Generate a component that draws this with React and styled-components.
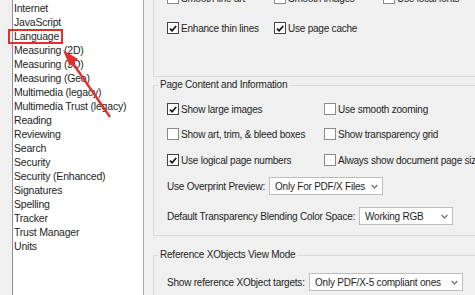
import React from 'react';
import styled, { createGlobalStyle } from 'styled-components';

const GlobalStyle = createGlobalStyle`
  html, body {
    margin: 0;
    padding: 0;
    background: #f0f0f0;
    font-family: "Liberation Sans", Arial, sans-serif;
    font-size: 10px;
    letter-spacing: -0.22px;
    color: #1e1e1e;
  }
`;

const Frame = styled.div`
  display: flex;
  width: 475px;
  height: 295px;
  overflow: hidden;
  position: relative;
`;

const Gutter = styled.div`
  width: 12px;
  flex: none;
`;

const List = styled.ul`
  flex: none;
  width: 129px;
  margin: 0;
  padding: 1px 0 0 1px;
  list-style: none;
  background: #fff;
  border-left: 1px solid #8f9399;
  border-right: 1px solid #a9a9a9;
  font-size: 10.5px;
  letter-spacing: -0.2px;
`;

const Item = styled.li`
  position: relative;
  height: 14px;
  line-height: 14px;
  white-space: nowrap;
`;

const Highlight = styled.span`
  position: absolute;
  left: -6px;
  top: 0;
  width: 51px;
  height: 11px;
  border: 2px solid #e2302f;
`;

const Panel = styled.div`
  flex: none;
  width: 340px;
  padding-left: 9px;
  display: flex;
  flex-direction: column;
`;

const Group = styled.fieldset`
  flex: none;
  margin: 0;
  padding: 0 0 0 13px;
  border: 1px solid #d9d9d9;
  min-width: 0;
  height: ${p => p.$h}px;
  margin-top: ${p => p.$top || 0}px;
  box-sizing: border-box;
`;

const Legend = styled.legend`
  margin-left: -9px;
  padding: 0 2px;
  line-height: 14px;
`;

const Row = styled.div`
  display: flex;
  align-items: center;
  height: 14px;
  margin-top: ${p => p.$gap || 0}px;
`;

const Check = styled.label`
  display: flex;
  align-items: center;
  width: ${p => p.$w}px;
  flex: none;
  white-space: nowrap;
`;

const Box = styled.span`
  width: 10px;
  height: 10px;
  border: 1px solid ${p => (p.$on ? '#444' : '#8a8a8a')};
  background: #fff;
  margin-right: 2px;
  flex: none;
  display: flex;
  align-items: center;
  justify-content: center;
`;

const Field = styled.div`
  display: flex;
  align-items: center;
  margin-top: ${p => p.$gap || 0}px;
  white-space: nowrap;
`;

const FieldLabel = styled.span`
  width: ${p => p.$w}px;
  flex: none;
`;

const Select = styled.div`
  width: ${p => p.$w}px;
  height: 18px;
  box-sizing: border-box;
  border: 1px solid #bdbdbd;
  background: #fff;
  display: flex;
  align-items: center;
  justify-content: space-between;
  padding: 0 4px 0 5px;
  flex: none;
`;

const Arrow = styled.svg`
  position: absolute;
  left: 0;
  top: 0;
  pointer-events: none;
`;

const Tick = () => (
  <svg width="8" height="7" viewBox="0 0 8 7">
    <path d="M1 3.6 L3.1 5.7 L7.2 1" fill="none" stroke="#111" strokeWidth="1.7" />
  </svg>
);

const Chevron = () => (
  <svg width="7" height="5" viewBox="0 0 7 5">
    <path d="M0.6 1 L3.5 3.9 L6.4 1" fill="none" stroke="#666" strokeWidth="1.1" />
  </svg>
);

const CheckItem = ({ on, w, children }) => (
  <Check $w={w}>
    <Box $on={on}>{on && <Tick />}</Box>
    {children}
  </Check>
);

const items = [
  'Internet', 'JavaScript', 'Language', 'Measuring (2D)', 'Measuring (3D)', 'Measuring (Geo)',
  'Multimedia (legacy)', 'Multimedia Trust (legacy)', 'Reading', 'Reviewing', 'Search',
  'Security', 'Security (Enhanced)', 'Signatures', 'Spelling', 'Tracker', 'Trust Manager', 'Units',
];

export default function App() {
  return (
    <>
      <GlobalStyle />
      <Frame>
        <Gutter />
        <List>
          {items.map(name => (
            <Item key={name}>
              {name}
              {name === 'Language' && <Highlight />}
            </Item>
          ))}
        </List>
        <Panel>
          <Group $h={87} $top={-10}>
            <Row>
              <CheckItem w={107}>Smooth line art</CheckItem>
              <CheckItem w={109}>Smooth images</CheckItem>
              <CheckItem w={100}>Use local fonts</CheckItem>
            </Row>
            <Row $gap={16}>
              <CheckItem on w={107}>Enhance thin lines</CheckItem>
              <CheckItem on w={109}>Use page cache</CheckItem>
            </Row>
          </Group>
          <Group $h={158} $top={1}>
            <Legend>Page Content and Information</Legend>
            <Row $gap={10}>
              <CheckItem on w={157}>Show large images</CheckItem>
              <CheckItem w={160}>Use smooth zooming</CheckItem>
            </Row>
            <Row $gap={11}>
              <CheckItem w={157}>Show art, trim, &amp; bleed boxes</CheckItem>
              <CheckItem w={160}>Show transparency grid</CheckItem>
            </Row>
            <Row $gap={12}>
              <CheckItem on w={157}>Use logical page numbers</CheckItem>
              <CheckItem w={160}>Always show document page size</CheckItem>
            </Row>
            <Field $gap={10}>
              <FieldLabel $w={102}>Use Overprint Preview:</FieldLabel>
              <Select $w={114}>Only For PDF/X Files<Chevron /></Select>
            </Field>
            <Field $gap={12}>
              <FieldLabel $w={192}>Default Transparency Blending Color Space:</FieldLabel>
              <Select $w={94}>Working RGB<Chevron /></Select>
            </Field>
          </Group>
          <Group $h={80} $top={12}>
            <Legend>Reference XObjects View Mode</Legend>
            <Field $gap={11}>
              <FieldLabel $w={142}>Show reference XObject targets:</FieldLabel>
              <Select $w={154}>Only PDF/X-5 compliant ones<Chevron /></Select>
            </Field>
          </Group>
        </Panel>
        <Arrow width="475" height="295" viewBox="0 0 475 295">
          <line x1="110" y1="117" x2="72" y2="62" stroke="#e2302f" strokeWidth="2.4" />
          <path d="M63 50 L78 59 L69.5 66 Z" fill="#e2302f" />
        </Arrow>
      </Frame>
    </>
  );
}
